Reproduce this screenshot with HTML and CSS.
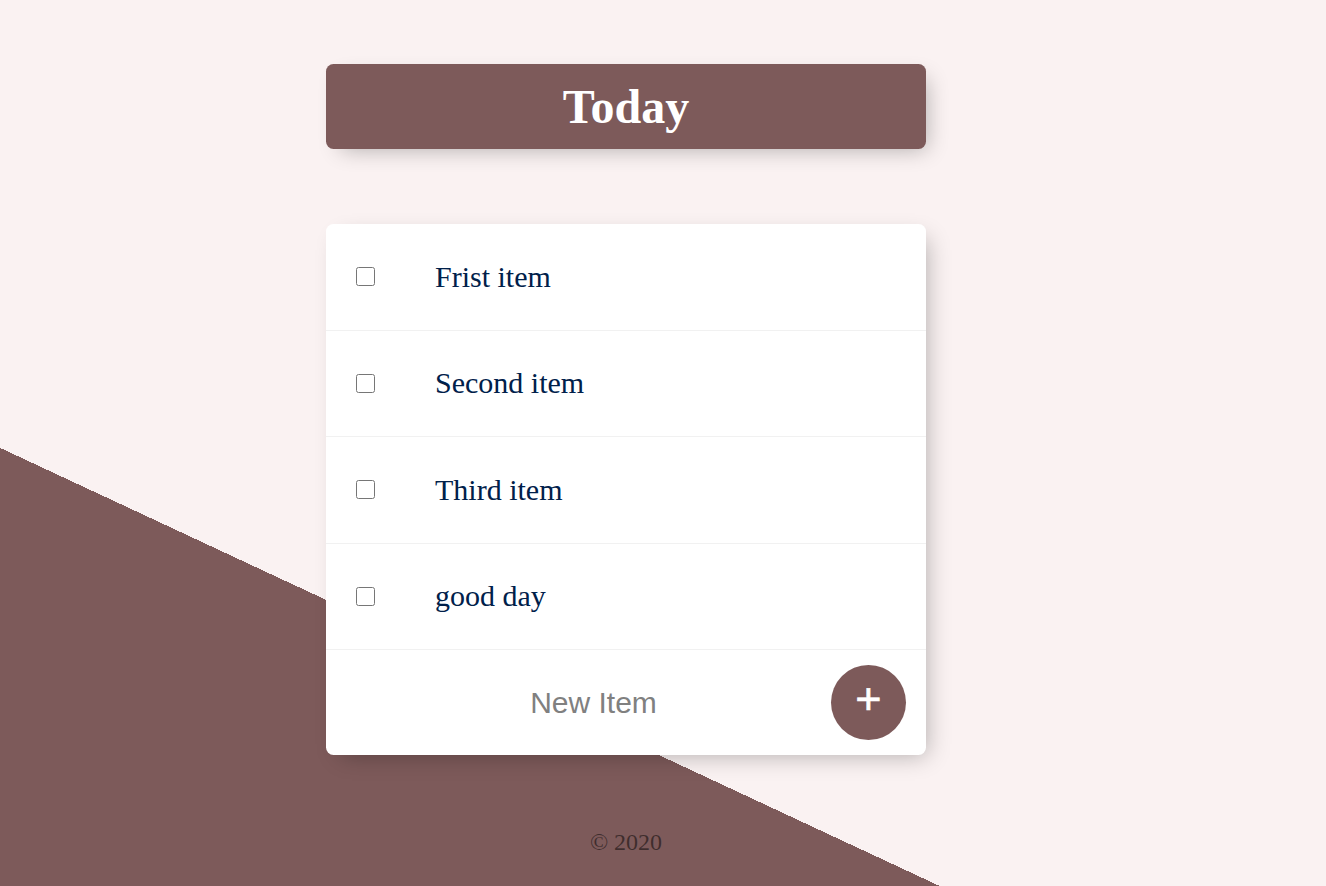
FILE: index.html
```html
<!DOCTYPE html>
<html lang="en">
<head>
<meta charset="utf-8">
<title>To Do List</title>
<link rel="stylesheet" href="styles.css">
</head>
<body>
  <div class="box heading">
    <h1>Today</h1>
  </div>
  <div class="box list">
    <div class="item">
      <input type="checkbox" class="check">
      <p class="item-text">Frist item</p>
    </div>
    <div class="item">
      <input type="checkbox" class="check">
      <p class="item-text">Second item</p>
    </div>
    <div class="item">
      <input type="checkbox" class="check">
      <p class="item-text">Third item</p>
    </div>
    <div class="item">
      <input type="checkbox" class="check">
      <p class="item-text">good day</p>
    </div>
    <form class="item new-form" onsubmit="return false">
      <input type="text" class="new-input" name="newItem" placeholder="New Item" autocomplete="off">
      <button type="submit" class="add-btn">+</button>
    </form>
  </div>
  <footer class="footer">© 2020</footer>
</body>
</html>
```

FILE: styles.css
```css
html {
  min-height: 100%;
  background-color: #FAF2F2;
  background-image: linear-gradient(25deg, #7D5A5A 50%, #FAF2F2 50%);
  background-size: 100% 1514px;
  background-repeat: no-repeat;
  font-family: "Liberation Sans", Arial, sans-serif;
}

body {
  margin: 0;
  padding: 64px 74px 0 0;
  overflow: hidden;
}

.box {
  width: 600px;
  margin: 0 auto;
  background: #fff;
  border-radius: 7.5px;
  box-shadow: 7.5px 7.5px 22.5px -7.5px rgba(0, 0, 0, 0.3);
}

.heading {
  background-color: #7D5A5A;
  text-align: center;
}

.heading h1 {
  margin: 0;
  padding: 15px;
  color: #fff;
  font-family: "Liberation Serif", "Times New Roman", serif;
  font-size: 48px;
  font-weight: bold;
  line-height: 55px;
}

.list {
  margin-top: 75px;
}

.item {
  min-height: 105.5px;
  display: flex;
  align-items: center;
  border-bottom: 1px solid #F1F1F1;
}

.item:last-child {
  border-bottom: 0;
  min-height: 105px;
}

.check {
  width: 19px;
  height: 19px;
  margin: 30px;
  flex: none;
}

.item-text {
  margin: 0;
  padding: 30px;
  font-family: "Liberation Serif", "Times New Roman", serif;
  font-size: 30px;
  font-weight: 200;
  color: #00204a;
}

.new-form {
  margin: 0 0 0 30px;
  text-align: center;
}

.new-input {
  text-align: center;
  height: 90px;
  width: 469px;
  padding: 1.5px 3px;
  border: none;
  font-family: "Liberation Sans", Arial, sans-serif;
  font-size: 30px;
  font-weight: 200;
  color: #000;
  background: transparent;
}

.new-input:focus {
  outline: none;
}

.new-input::placeholder {
  color: grey;
  opacity: 1;
}

.add-btn {
  min-height: 75px;
  width: 75px;
  height: 75px;
  padding: 0 0 9px 0;
  border-radius: 50%;
  border: 0;
  background-color: #7D5A5A;
  color: #fff;
  font-family: "Liberation Sans", Arial, sans-serif;
  font-size: 45px;
  line-height: 1;
  -webkit-text-stroke: 0.6px #fff;
  flex: none;
}

.footer {
  margin-top: 74px;
  text-align: center;
  font-family: "Liberation Serif", "Times New Roman", serif;
  font-size: 24px;
  color: rgba(0, 0, 0, 0.5);
}
```
